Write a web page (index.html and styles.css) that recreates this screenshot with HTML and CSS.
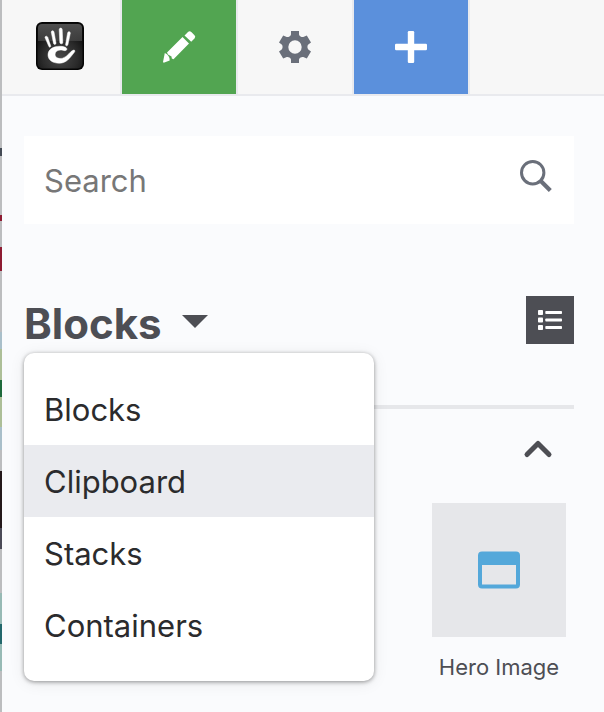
FILE: index.html
```html
<!DOCTYPE html>
<html lang="en">
<head>
<meta charset="utf-8">
<meta name="viewport" content="width=device-width, initial-scale=1">
<title>Blocks</title>
<link rel="stylesheet" href="styles.css">
</head>
<body>
<div class="page-edge"></div>
<div class="panel">
  <nav class="toolbar">
    <a class="tool tool-logo" href="#" aria-label="Home">
      <svg width="48" height="48" viewBox="0 0 48 48">
        <defs>
          <radialGradient id="badge" cx=".5" cy=".75" r=".65"><stop offset="0" stop-color="#484848"/><stop offset=".6" stop-color="#2b2b2b"/><stop offset="1" stop-color="#101010"/></radialGradient>
          <linearGradient id="gloss" x1="0" y1="0" x2="0" y2="1"><stop offset="0" stop-color="#606060"/><stop offset="1" stop-color="#444"/></linearGradient>
        </defs>
        <rect width="48" height="48" rx="6" fill="#050505"/>
        <rect x="1.5" y="1.5" width="45" height="45" rx="5" fill="url(#badge)"/>
        <path d="M2 19V6a4 4 0 0 1 4-4h36a4 4 0 0 1 4 4v13z" fill="url(#gloss)" opacity=".8"/>
        <g fill="#fff" stroke="#fff" stroke-width=".5">
          <path d="M9 15.500c0-1.500 2-2 2.700-.3l3 8.600c.3 1.200-1 2-1.800.8z"/>
          <path d="M15.300 10.200c0-1.800 2.200-2 2.700-.2l2 11c.2 1.700-2 2-2.500.4z"/>
          <path d="M23.200 7.600c.1-2 2.900-2 3 0l.6 12.800c0 1.900-2.800 1.900-3 0z"/>
          <path d="M31.600 11c.4-2 3-1.600 2.700.3l-2.400 11.500c-.6 1.700-2.500 1.200-2.300-.4z"/>
          <path d="M30.600 28c1.100-2-1.600-3.700-6.600-3.700-7.200 0-12 3.300-12 8.700 0 5 4.800 8.300 11.500 8.200 7-.2 10.300-5 15-11.200.8-1.300.2-2.200-1.300-1.800-3.500 1.200-5.200 6.400-10.600 8-4.500 1-7.800-.9-7.500-4.100.3-3.300 4.200-4.600 7.600-3.800 1.800.5 3 .5 3.900-.3z"/>
        </g>
      </svg>
    </a>
    <button class="tool tool-edit" type="button" aria-label="Edit">
      <svg width="32" height="32" viewBox="0 0 32 32" fill="#fff"><path d="M19.500 6 26 12.500 10.500 28.300 8.800 27.500 8.500 25.500 5 23.500 4 21.500zM21.500 4.500 25 1a2.500 2.500 0 0 1 3.300 0L31.500 4.300a2.300 2.300 0 0 1 0 3.200L28.200 10.800zM1.800 22a8 8 0 0 1 4.900 7.500L.7 31.700 0 31z"/></svg>
    </button>
    <button class="tool tool-settings" type="button" aria-label="Settings">
      <svg width="32" height="32" viewBox="0 0 32 32"><path fill="#6a6f7a" fill-rule="evenodd" d="M12 0h8v3.500q.4 1.300 1.600 2 1.400.8 2.700.4l3.500-1.300L32 11.400l-2.700 2.200q-.9 1-.9 2.400t.9 2.400l2.700 2.200-4.200 6.800-3.500-1.300q-1.300-.4-2.700.4-1.200.7-1.600 2V32h-8v-3.500q-.4-1.300-1.600-2-1.400-.8-2.700-.4l-3.500 1.300L0 20.600l2.700-2.200q.9-1 .9-2.400t-.9-2.400L0 11.400l4.200-6.800 3.500 1.300q1.300.4 2.700-.4 1.200-.7 1.600-2zM16 9.300a6.700 6.700 0 1 0 0 13.400 6.700 6.700 0 0 0 0-13.400z"/></svg>
    </button>
    <button class="tool tool-add" type="button" aria-label="Add content">
      <svg width="32" height="32" viewBox="0 0 32 32" fill="#fff"><rect y="12.800" width="32" height="6.400" rx="1.200"/><rect x="12.800" width="6.400" height="32" rx="1.200"/></svg>
    </button>
  </nav>

  <main class="content">
    <form class="search">
      <input class="search-input" type="search" placeholder="Search" aria-label="Search">
      <button class="search-button" type="submit" aria-label="Search">
        <svg width="32" height="32" viewBox="0 0 32 32" fill="none" stroke="#6a6f7a"><circle cx="12.700" cy="12.700" r="11.200" stroke-width="3"/><path d="m20.300 20.600 10 10" stroke-width="4.200"/></svg>
      </button>
    </form>

    <header class="heading">
      <div class="switcher">
        <button class="switcher-button" type="button" aria-haspopup="true" aria-expanded="true">
          <span>Blocks</span>
          <svg width="26" height="13" viewBox="0 0 26 13"><path d="M0 0h26L13 13z" fill="#4d4e54"/></svg>
        </button>
        <div class="menu">
          <a class="menu-item" href="#">Blocks</a>
          <a class="menu-item is-active" href="#">Clipboard</a>
          <a class="menu-item" href="#">Stacks</a>
          <a class="menu-item" href="#">Containers</a>
        </div>
      </div>
      <button class="list-button" type="button" aria-label="List view">
        <svg width="24" height="20" viewBox="0 0 24 20" fill="#fff"><rect width="5" height="5" rx=".8"/><rect y="7.500" width="5" height="5" rx=".8"/><rect y="15" width="5" height="5" rx=".8"/><rect x="7.300" y="1" width="16.700" height="3" rx=".8"/><rect x="7.300" y="8.500" width="16.700" height="3" rx=".8"/><rect x="7.300" y="16" width="16.700" height="3" rx=".8"/></svg>
      </button>
    </header>

    <section class="group">
      <button class="collapse" type="button" aria-label="Collapse">
        <svg width="28" height="18" viewBox="0 0 28 18" fill="none" stroke="#4d4e54" stroke-width="5" stroke-linecap="round" stroke-linejoin="round"><path d="M3 14.500 14 3.500 25 14.500"/></svg>
      </button>
      <div class="blocks">
        <a class="block" href="#">
          <span class="block-icon">
            <svg width="42" height="38" viewBox="0 0 42 38"><path fill="#54a8da" fill-rule="evenodd" d="M4 .5h34a4 4 0 0 1 4 4v29a4 4 0 0 1-4 4H4a4 4 0 0 1-4-4v-29a4 4 0 0 1 4-4zm0 13.500v19.500h34V14z"/></svg>
          </span>
          <span>Hero Image</span>
        </a>
      </div>
    </section>
  </main>
</div>
</body>
</html>
```
FILE: styles.css
```css
* {
  box-sizing: border-box;
}

body {
  margin: 0;
  min-height: 100vh;
  display: flex;
  background: #fafbfd;
  color: #4d4e54;
  font-family: Inter, "Liberation Sans", sans-serif;
}

button {
  padding: 0;
  border: 0;
  background: none;
  color: inherit;
  font: inherit;
  cursor: pointer;
}

a {
  color: inherit;
  text-decoration: none;
}

svg {
  display: block;
  overflow: visible;
}

/* Sliver of the site page that stays visible beside the panel */
.page-edge {
  flex: 0 0 2px;
  background: linear-gradient(#bcbdbf 0 148px, #444b55 148px 156px, #bcbdbf 156px 215px, #8e1b32 215px 221px, #bcbdbf 221px 247px, #8e1b32 247px 271px, #bcbdbf 271px 332px, #a9bfca 332px 349px, #adbf98 349px 380px, #1e6a3c 380px 397px, #adbf98 397px 427px, #a9bfca 427px 450px, #bcbdbf 450px 471px, #24191b 471px 528px, #4b4b58 528px 549px, #bcbdbf 549px 593px, #97bab5 593px 624px, #23686c 624px 644px, #97bab5 644px 671px, #bcbdbf 671px);
}

.panel {
  flex: 1;
  min-width: 0;
}

.toolbar {
  display: flex;
  height: 96px;
  background: #f7f7f7;
  border-bottom: 2px solid #e9eaee;
}

.tool {
  flex: 0 0 116px;
  display: flex;
  align-items: center;
  justify-content: center;
  border-right: 2px solid #e9eaee;
}

.tool-logo {
  flex-basis: 120px;
  align-items: flex-start;
  justify-content: flex-start;
  padding: 22px 34px;
}

.tool-edit {
  background: #52a551;
}

.tool-add {
  background: #5b90dc;
}

.tool-edit,
.tool-add {
  background-clip: padding-box;
}

.content {
  padding: 40px 30px 30px 22px;
}

.search {
  display: flex;
  align-items: center;
  height: 88px;
  padding: 0 22px 0 20px;
  background: #fff;
}

.search-input {
  flex: 1;
  min-width: 0;
  padding: 2px 0 0;
  border: 0;
  outline: 0;
  background: none;
  color: #2b2b2d;
  font: 31px/40px Inter, "Liberation Sans", sans-serif;
}

.search-input::placeholder {
  color: #777;
  opacity: 1;
}

.search-button {
  padding-bottom: 8px;
}

.heading {
  display: flex;
  align-items: flex-start;
  justify-content: space-between;
  height: 113px;
  margin-top: 72px;
  border-bottom: 4px solid #e6e7ea;
}

.switcher {
  position: relative;
}

.switcher-button {
  display: flex;
  align-items: center;
  gap: 20px;
  height: 54px;
  font-size: 42px;
  font-weight: 700;
}

.switcher-button svg {
  margin-bottom: 4px;
}

.menu {
  position: absolute;
  top: 57px;
  left: 0;
  width: 350px;
  padding: 20px 0;
  border-radius: 10px;
  background: #fff;
  box-shadow: 0 1px 4px rgba(0, 0, 0, 0.4), 0 2px 16px rgba(0, 0, 0, 0.08);
}

.menu-item {
  display: block;
  padding: 2px 20px 0;
  color: #2b2b2d;
  font-size: 31px;
  line-height: 70px;
}

.menu-item.is-active {
  background: #eaebef;
}

.list-button {
  display: flex;
  align-items: center;
  justify-content: center;
  width: 48px;
  height: 48px;
  background: #4d4e54;
}

.group {
  display: flex;
  flex-direction: column;
  align-items: flex-end;
  padding: 31px 0 0;
}

.collapse {
  margin-right: 22px;
}

.blocks {
  margin-top: 45px;
  padding-right: 8px;
}

.block {
  display: flex;
  flex-direction: column;
  align-items: center;
  gap: 16px;
  font-size: 22px;
  line-height: 28px;
}

.block-icon {
  display: flex;
  align-items: center;
  justify-content: center;
  width: 134px;
  height: 134px;
  background: #e6e7ea;
}
```
